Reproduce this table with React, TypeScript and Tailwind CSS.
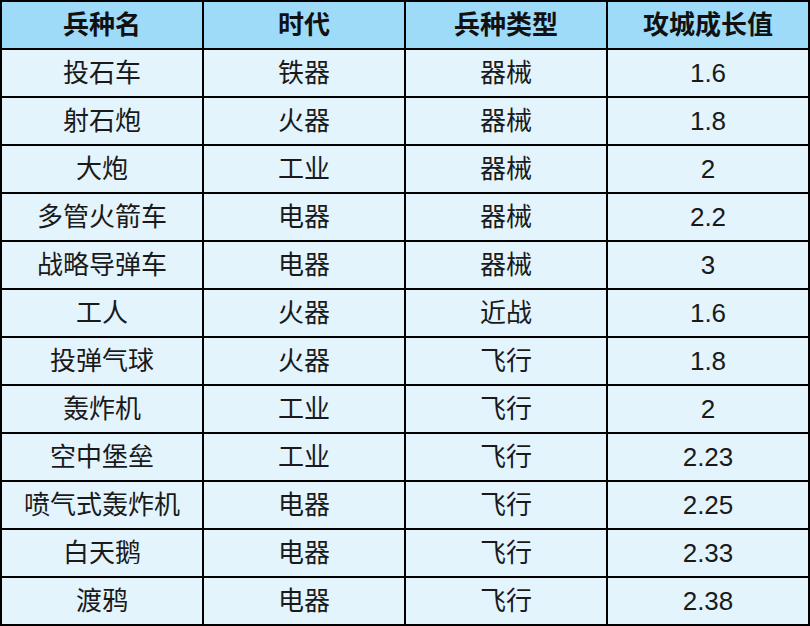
import React from "react";

const rows = [
  ["投石车", "铁器", "器械", "1.6"],
  ["射石炮", "火器", "器械", "1.8"],
  ["大炮", "工业", "器械", "2"],
  ["多管火箭车", "电器", "器械", "2.2"],
  ["战略导弹车", "电器", "器械", "3"],
  ["工人", "火器", "近战", "1.6"],
  ["投弹气球", "火器", "飞行", "1.8"],
  ["轰炸机", "工业", "飞行", "2"],
  ["空中堡垒", "工业", "飞行", "2.23"],
  ["喷气式轰炸机", "电器", "飞行", "2.25"],
  ["白天鹅", "电器", "飞行", "2.33"],
  ["渡鸦", "电器", "飞行", "2.38"],
];

const headers = ["兵种名", "时代", "兵种类型", "攻城成长值"];

export default function App() {
  return (
    <div
      className="w-[810px] h-[626px] bg-white"
      style={{ fontFamily: '"Liberation Sans", "Noto Sans CJK SC", sans-serif' }}
    >
      <table className="w-[810px] table-fixed border-collapse border-2 border-black">
        <thead>
          <tr className="h-[48px] bg-[#9ddbf8]">
            {headers.map((h) => (
              <th
                key={h}
                className="border-2 border-black text-center text-[26px] leading-none font-bold text-[#111]"
              >
                {h}
              </th>
            ))}
          </tr>
        </thead>
        <tbody>
          {rows.map((r, i) => (
            <tr key={i} className="h-[48px] bg-[#e4f4fd]">
              {r.map((c, j) => (
                <td
                  key={j}
                  className="border-2 border-black text-center text-[26px] leading-none text-[#1a1a1a]"
                >
                  {c}
                </td>
              ))}
            </tr>
          ))}
        </tbody>
      </table>
    </div>
  );
}
